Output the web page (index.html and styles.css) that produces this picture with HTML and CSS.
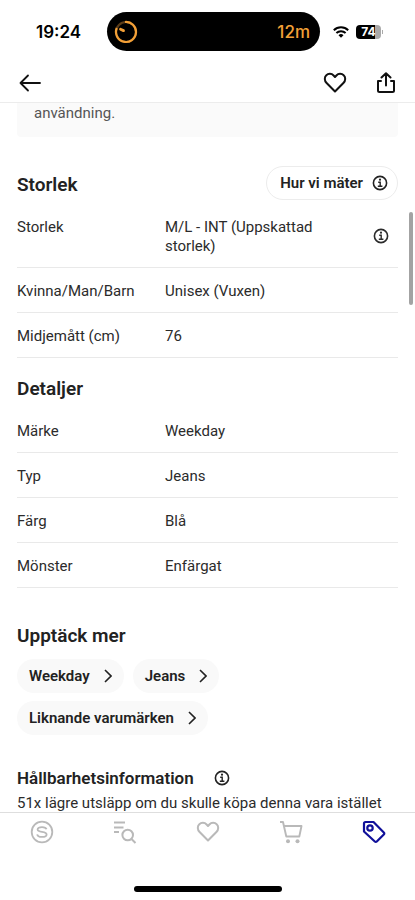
FILE: index.html
```html
<!DOCTYPE html>
<html lang="sv">
<head>
<meta charset="utf-8">
<meta name="viewport" content="width=device-width, initial-scale=1">
<title>Weekday Jeans</title>
<link rel="stylesheet" href="styles.css">
</head>
<body>
<svg class="defs" aria-hidden="true">
  <symbol id="info" viewBox="0 0 16 16"><circle cx="8" cy="8" r="6.6" fill="none" stroke="currentColor" stroke-width="1.6"/><path d="M6.200 7.200h2v4M5.800 11.300h4.600" fill="none" stroke="currentColor" stroke-width="1.400"/><circle cx="8" cy="4.700" r="1.100" fill="currentColor"/></symbol>
  <symbol id="heart" viewBox="0 0 24 24"><path d="M12 20.500 3.600 12C1.200 9.500 1.300 6.200 3.300 4.300 5.300 2.300 8.600 2.400 10.600 4.500L12 6l1.400-1.500c2-2.100 5.300-2.200 7.300-.2 2 1.900 2.100 5.200-.3 7.700z" fill="none" stroke="currentColor" stroke-width="2" stroke-linejoin="round"/></symbol>
  <symbol id="chevron" viewBox="0 0 8 14"><path d="m1 1 6 6-6 6" fill="none" stroke="currentColor" stroke-width="1.600"/></symbol>
</svg>
<div class="app">
  <header class="top">
    <div class="status">
      <time class="clock">19:24</time>
      <div class="island">
        <svg width="24" height="24" viewBox="0 0 24 24" fill="none" stroke="#f3a037" stroke-width="2.200"><circle cx="12" cy="12" r="10" stroke="#5c3d19"/><path d="M11 2a10 10 0 1 1-8.200 6"/><path d="m6.500 9.300 3 1.300" stroke-width="2.800" stroke-linecap="round"/></svg>
        <span>12m</span>
      </div>
      <div class="signals">
        <svg width="16" height="12" viewBox="0 0 16 12" fill="none" stroke="#000" stroke-width="2"><path d="M.8 4.300a10.300 10.300 0 0 1 14.400 0M3.400 7a6.600 6.600 0 0 1 9.200 0"/><path d="M5.500 9.200a3.600 3.600 0 0 1 5 0L8 11.800z" fill="#000" stroke="none"/></svg>
        <span class="battery">74</span>
      </div>
    </div>
    <div class="bar">
      <button class="icon" aria-label="Tillbaka"><svg width="22" height="18" viewBox="0 0 22 18" fill="none" stroke="currentColor" stroke-width="1.800" stroke-linecap="round" stroke-linejoin="round"><path d="M21 9H1.500M9 1.500 1.500 9 9 16.500"/></svg></button>
      <span class="actions">
        <button class="icon" aria-label="Spara"><svg width="24" height="24"><use href="#heart"/></svg></button>
        <button class="icon" aria-label="Dela"><svg width="18" height="21" viewBox="0 0 18 21" fill="none" stroke="currentColor" stroke-width="2" stroke-linecap="round" stroke-linejoin="round"><path d="M9 13.500V1.500M4.500 5.500 9 1.200l4.500 4.300M4 9H1v9.500q0 1.500 1.500 1.500h13q1.500 0 1.500-1.500V9h-3"/></svg></button>
      </span>
    </div>
  </header>
  <main class="content">
    <p class="notice">användning.</p>
    <section class="size">
      <div class="head">
        <h2>Storlek</h2>
        <button class="pill">Hur vi mäter <svg width="16" height="16"><use href="#info"/></svg></button>
      </div>
      <table>
        <tr><th scope="row">Storlek</th><td>M/L - INT (Uppskattad storlek)</td><td class="more"><button class="icon" aria-label="Om storlek"><svg width="16" height="16"><use href="#info"/></svg></button></td></tr>
        <tr><th scope="row">Kvinna/Man/Barn</th><td colspan="2">Unisex (Vuxen)</td></tr>
        <tr><th scope="row">Midjemått (cm)</th><td colspan="2">76</td></tr>
      </table>
    </section>
    <section class="details">
      <h2>Detaljer</h2>
      <table>
        <tr><th scope="row">Märke</th><td>Weekday</td></tr>
        <tr><th scope="row">Typ</th><td>Jeans</td></tr>
        <tr><th scope="row">Färg</th><td>Blå</td></tr>
        <tr><th scope="row">Mönster</th><td>Enfärgat</td></tr>
      </table>
    </section>
    <section class="discover">
      <h2>Upptäck mer</h2>
      <div class="chips">
        <a class="chip" href="#">Weekday <svg width="8" height="14"><use href="#chevron"/></svg></a>
        <a class="chip" href="#">Jeans <svg width="8" height="14"><use href="#chevron"/></svg></a>
        <a class="chip" href="#">Liknande varumärken <svg width="8" height="14"><use href="#chevron"/></svg></a>
      </div>
    </section>
    <section class="eco">
      <h3>Hållbarhetsinformation <button class="icon" aria-label="Om hållbarhet"><svg width="16" height="16"><use href="#info"/></svg></button></h3>
      <p>51x lägre utsläpp om du skulle köpa denna vara istället</p>
    </section>
    <div class="scroll"></div>
  </main>
  <footer>
    <nav class="tabs">
      <a href="#" aria-label="Start"><svg width="24" height="24" viewBox="0 0 24 24" fill="none" stroke="currentColor" stroke-width="1.800"><circle cx="12" cy="12" r="10.300"/><path d="M16.500 9.300C16 7.800 14.400 7.100 12 7.100c-2.700 0-4.400.8-4.400 2.400 0 3.500 9 1.200 9 4.900 0 1.700-1.800 2.500-4.600 2.500-2.700 0-4.500-.9-4.800-2.600"/></svg></a>
      <a href="#" aria-label="Sök"><svg width="24" height="24" viewBox="0 0 24 24" fill="none" stroke="currentColor" stroke-width="2"><path d="M1 2.500h11M1 7.500h9.500M1 12h5"/><circle cx="14.700" cy="15" r="5.300"/><path d="m18.500 19 4 4"/></svg></a>
      <a href="#" aria-label="Favoriter"><svg width="24" height="24"><use href="#heart"/></svg></a>
      <a href="#" aria-label="Varukorg"><svg width="24" height="24" viewBox="0 0 24 24" fill="none" stroke="currentColor" stroke-width="1.900" stroke-linejoin="round"><path d="M1 2h3l3.300 14.500h13L22.500 6H5"/><circle cx="9" cy="21.300" r="2" fill="currentColor" stroke="none"/><circle cx="18.500" cy="21.300" r="2" fill="currentColor" stroke="none"/></svg></a>
      <a class="active" href="#" aria-label="Sälj"><svg width="24" height="24" viewBox="0 0 24 24" fill="none" stroke="currentColor" stroke-width="2.200" stroke-linejoin="round"><path d="M2 3.500Q2 2 3.500 2h8L21.800 12.500q1 1 0 2l-7 7q-1 1-2 0L2 11.500z"/><circle cx="8" cy="8" r="2.700"/></svg></a>
    </nav>
    <div class="home"></div>
  </footer>
</div>
</body>
</html>
```
FILE: styles.css
```css
* { box-sizing: border-box; }
body {
  margin: 0;
  background: #fff;
  color: #2b2b2b;
  font: 15px/19px Roboto, "Liberation Sans", sans-serif;
}
.defs { position: absolute; width: 0; height: 0; }
svg { display: block; flex: none; }
h2, h3, p { margin: 0; }
h2 { font-size: 19px; line-height: 24px; font-weight: 600; color: #222; }
button { font: inherit; color: inherit; cursor: pointer; }
a { color: inherit; text-decoration: none; }
.icon { display: inline-flex; padding: 0; border: 0; background: none; }
.app { display: flex; flex-direction: column; height: 100vh; }
.top { border-bottom: 1px solid #ececec; color: #111; }
.status {
  display: grid;
  grid-template-columns: 107px 1fr 95px;
  align-items: center;
  padding-top: 12px;
}
.clock { padding-left: 36px; font: 600 17px/20px Inter, sans-serif; color: #000; }
.island {
  display: flex;
  align-items: center;
  justify-content: space-between;
  height: 39px;
  padding: 0 10px 0 7px;
  border-radius: 20px;
  background: #000;
  color: #f3a037;
  font: 500 17px/20px Inter, sans-serif;
}
.signals { display: flex; align-items: center; gap: 7px; padding-left: 13px; }
.battery {
  position: relative;
  width: 25px;
  height: 14px;
  border-radius: 4px;
  background: linear-gradient(90deg, #000 74%, #aaa 74%);
  color: #fff;
  font: 700 12px/14px Inter, sans-serif;
  text-align: center;
}
.battery::after {
  content: "";
  position: absolute;
  left: 26px;
  top: 5px;
  width: 1px;
  height: 4px;
  background: #aaa;
}
.bar {
  display: flex;
  align-items: center;
  justify-content: space-between;
  height: 51px;
  padding: 12px 20px 0 19px;
}
.actions { display: flex; align-items: center; gap: 30px; }
.content { position: relative; flex: 1; min-height: 0; overflow: hidden; padding: 0 17px; }
.notice {
  padding: 0 17px 14px;
  border-radius: 0 0 4px 4px;
  background: #fafafa;
  color: #555;
  line-height: 20px;
}
.size { margin-top: 29px; }
.head { display: flex; align-items: center; justify-content: space-between; margin-bottom: 4px; }
.head h2 { padding-top: 4px; }
.pill {
  display: flex;
  align-items: center;
  gap: 9px;
  height: 34px;
  padding: 0 9px 0 13px;
  border: 1px solid #ececec;
  border-radius: 17px;
  background: #fff;
  color: #222;
  font-weight: 600;
}
table { width: 100%; border-collapse: separate; border-spacing: 0; table-layout: fixed; }
th, td {
  padding: 14px 0 11px;
  border-bottom: 1px solid #e9e9e9;
  text-align: left;
  vertical-align: top;
  font-weight: 400;
}
th { width: 148px; }
.more { width: 72px; padding: 0 9px 0 0; text-align: right; vertical-align: middle; }
.more .icon { vertical-align: middle; }
.details { margin-top: 19px; }
.details h2 { margin-bottom: 7px; }
.discover { margin-top: 36px; }
.chips { display: flex; flex-wrap: wrap; gap: 8px 9px; margin-top: 11px; }
.chip {
  display: flex;
  align-items: center;
  gap: 14px;
  height: 34px;
  padding: 0 12px;
  border-radius: 17px;
  background: #f9f9f9;
  color: #222;
  font-weight: 600;
}
.eco { margin-top: 31px; white-space: nowrap; }
.eco h3 { display: flex; align-items: center; gap: 20px; margin-bottom: 4px; font-size: 17px; line-height: 24px; font-weight: 600; color: #222; }
.scroll {
  position: absolute;
  right: 2px;
  top: 109px;
  width: 4px;
  height: 93px;
  border-radius: 2px;
  background: #a3a3a3;
}
footer { border-top: 1px solid #dedede; background: #fff; }
.tabs { display: flex; justify-content: space-around; padding-top: 7px; color: #b9b9b9; }
.tabs a { display: flex; }
.tabs .active { color: #10109a; }
.home { width: 148px; height: 6px; margin: 42px auto 8px; border-radius: 3px; background: #000; }
```
